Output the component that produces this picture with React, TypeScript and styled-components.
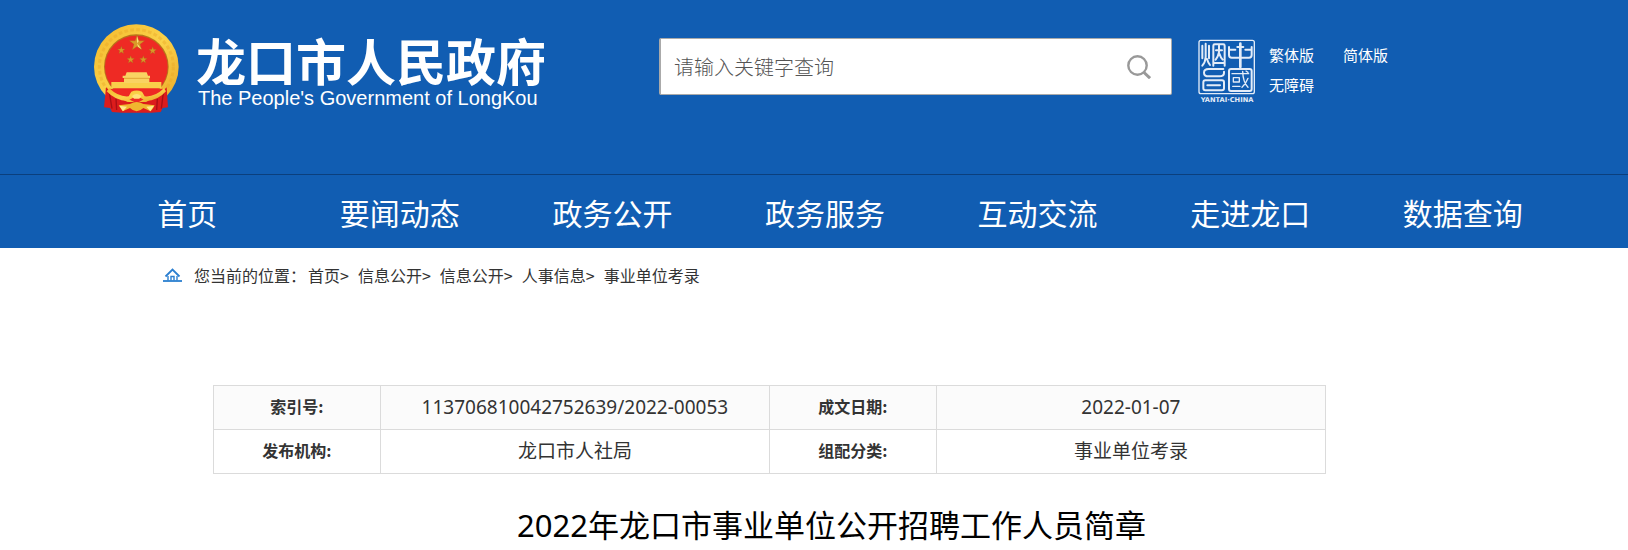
import React from "react";
import styled, { createGlobalStyle } from "styled-components";

const BLUE = "#115db2";
const SANS = `"Noto Sans", "Noto Sans CJK SC", sans-serif`;
const CJK = `"Noto Sans CJK SC", sans-serif`;

const GlobalStyle = createGlobalStyle`
  *, *::before, *::after { box-sizing: border-box; }
  body { margin: 0; background: #fff; color: #333; font-family: ${CJK}; }
  a { color: inherit; text-decoration: none; }
`;

const Header = styled.header`
  background: ${BLUE};
  color: #fff;
`;

const TopBar = styled.div`
  display: flex;
  align-items: flex-start;
  min-height: 174px;
  padding: 24px 94px 0;
`;

const Brand = styled.a`
  display: flex;
  align-items: flex-start;
  gap: 17px;
  width: 565px;
  flex: none;
`;

const BrandText = styled.span`
  display: flex;
  flex-direction: column;
  padding-top: 8px;
  white-space: nowrap;
`;

const BrandName = styled.span`
  font-size: 50px;
  line-height: 54px;
  font-weight: 700;
`;

const BrandLatin = styled.span`
  padding-left: 2px;
  font-family: "Liberation Sans", sans-serif;
  font-size: 20px;
  line-height: 24px;
`;

const SearchForm = styled.form`
  display: flex;
  align-items: center;
  flex: 0 1 513px;
  height: 57px;
  margin-top: 14px;
  padding: 0 20px 0 13px;
  background: #fff;
  border: 1px solid #aaa;
  border-left-width: 2px;
  border-radius: 2px;
`;

const SearchInput = styled.input`
  flex: 1;
  min-width: 0;
  padding: 0;
  border: 0;
  outline: 0;
  background: none;
  color: #333;
  font-family: ${CJK};
  font-size: 20px;
  line-height: 30px;
  font-weight: 300;
  &::placeholder { color: #555; opacity: 1; }
`;

const SearchButton = styled.button`
  display: flex;
  padding: 0;
  border: 0;
  background: none;
  cursor: pointer;
`;

const SealLink = styled.a`
  display: flex;
  flex: none;
  margin: 15px 13px 0 26px;
`;

const Tools = styled.nav`
  display: grid;
  grid-template-columns: 74px 74px;
  grid-auto-rows: 30px;
  margin-top: 16px;
  font-size: 15px;
  line-height: 30px;
`;

const MainNav = styled.nav`
  display: flex;
  border-top: 1px solid #0b3f7d;
  padding: 0 59px 0 81px;
`;

const NavLink = styled.a`
  flex: 1;
  padding: 15px 0 14px;
  text-align: center;
  font-size: 30px;
  line-height: 44px;
  white-space: nowrap;
`;

const Breadcrumb = styled.nav`
  display: flex;
  align-items: center;
  padding: 15px 163px 0;
  font-size: 16px;
  line-height: 24px;
`;

const CrumbLabel = styled.span`
  margin-left: 12px;
`;

const Crumb = styled.span`
  margin-left: 9px;
  &:first-of-type { margin-left: 0; }
`;

const Trail = styled.span`
  display: flex;
  margin-left: 2px;
`;

const Article = styled.main`
  padding: 98px 302px 0 213px;
`;

const InfoTable = styled.table`
  width: 100%;
  table-layout: fixed;
  border-collapse: collapse;
`;

const InfoRow = styled.tr<{ $shaded?: boolean }>`
  background: ${(p) => (p.$shaded ? "#fbfbfb" : "#fff")};
`;

const Label = styled.th`
  width: 15%;
  height: 44px;
  padding: 0 0 3px;
  border: 1px solid #dbdbdb;
  font-size: 16px;
  line-height: 24px;
  font-weight: 700;
`;

const Value = styled.td`
  padding: 0 0 2px;
  border: 1px solid #dbdbdb;
  text-align: center;
  font-family: ${SANS};
  font-size: 19px;
  line-height: 28px;
`;

const Title = styled.h1`
  margin: 27px -124px 0 0;
  color: #000;
  text-align: center;
  font-family: ${SANS};
  font-size: 31px;
  line-height: 48px;
  font-weight: 400;
`;

const star = (cx: number, cy: number, r: number) =>
  Array.from({ length: 10 }, (_, i) => {
    const a = (Math.PI / 5) * i - Math.PI / 2;
    const d = i % 2 ? r * 0.4 : r;
    return `${(cx + d * Math.cos(a)).toFixed(2)},${(cy + d * Math.sin(a)).toFixed(2)}`;
  }).join(" ");

const Emblem = () => (
  <svg width="85" height="91" viewBox="0 0 255 273" aria-hidden="true">
    <defs>
      <linearGradient id="gold" x1="0" y1="0" x2="1" y2="1">
        <stop offset="0" stopColor="#f3b92c" />
        <stop offset=".5" stopColor="#fbd24a" />
        <stop offset="1" stopColor="#e9a625" />
      </linearGradient>
    </defs>
    <circle cx="127" cy="128" r="127" fill="url(#gold)" />
    <circle cx="127" cy="128" r="111" fill="none" stroke="#e9a625" strokeWidth="9" strokeDasharray="11 7" opacity=".4" />
    <circle cx="127" cy="128" r="97" fill="#b9741a" />
    <circle cx="127" cy="129" r="94" fill="#ee2a24" />
    <path d="M36 190 L60 212 L100 234 H156 L196 212 L218 190 L222 250 L206 252 L200 264 L172 266 H84 L54 264 L48 252 L30 250 Z" fill="#dc1c1c" />
    <path d="M46 206 L54 254 M208 206 L202 254 M66 224 L68 258 M190 224 L188 258" stroke="#a80f16" strokeWidth="4" />
    <path d="M52 174 H202 V193 H52 Z" fill="#f9cf4a" />
    <path d="M90 162 H166 V177 H90 Z M98 145 H158 L162 155 H168 V162 H86 V155 H94 Z" fill="#f9d362" />
    <path d="M90 163 H166" stroke="#d58e20" strokeWidth="2" />
    <path d="M46 194 Q128 202 208 194 L198 208 Q170 232 150 226 L128 238 L104 226 Q82 232 56 208 Z" fill="#ee2a24" />
    <path d="M46 193 Q74 220 104 217 L112 203 Q128 196 144 203 L152 217 Q182 220 210 193 L216 202 Q192 230 155 231 L140 222 H116 L100 231 Q64 230 38 202 Z" fill="url(#gold)" />
    <path d="M114 216 Q128 204 142 216 L136 224 H120 Z" fill="#ffe07b" />
    <path d="M74 244 L108 240 Q128 228 148 240 L182 244 Q178 254 170 262 L148 252 Q128 272 108 252 L86 262 Z" fill="#f0b62f" />
    <path d="M76 245 L99 248 L87 262 Z M180 245 L157 248 L169 262 Z" fill="#ffe88c" />
    <g fill="#d99a28" stroke="#a9641a" strokeWidth="1">
      <polygon points={star(129, 58, 24)} />
      <polygon points={star(82, 79, 12)} />
      <polygon points={star(176, 80, 12)} />
      <polygon points={star(110, 107, 12)} />
      <polygon points={star(148, 107, 12)} />
    </g>
    <path d="M129 36 L134 52 L129 58 Z M129 58 L143 76 L132 68 Z" fill="#ffe07b" />
  </svg>
);

const Seal = () => (
  <svg width="58" height="64" viewBox="24 20 174 192" role="img" aria-label="烟台">
    <g fill="none" stroke="#e3ecf8" strokeWidth="6" strokeLinejoin="round" strokeLinecap="round">
      <rect x="27" y="24" width="166" height="160" rx="6" strokeWidth="4" />
      <path d="M37 40 V78 M47 34 V74 Q46 90 37 100 M57 40 V78 M51 80 Q54 90 60 98" />
      <path d="M70 100 V40 Q70 36 74 36 H100 Q104 36 104 40 V100 M70 92 H104 M78 54 H96 M87 40 V60 Q84 74 77 82 M88 64 Q92 76 98 82" />
      <path d="M100 110 H56 Q42 110 42 121 Q42 132 56 132 H88 Q102 132 102 122 V118" />
      <path d="M46 144 H96 Q102 144 102 150 V168 Q102 174 96 174 H46 Q40 174 40 168 V150 Q40 144 46 144 Z M52 159 H90" />
      <path d="M117 44 V68 Q117 76 125 76 H177 Q185 76 185 68 V44 M117 52 H136 M166 52 H185" />
      <path d="M151 34 V104 M151 56 V100" strokeWidth="8" />
      <path d="M142 44 H160" />
      <rect x="117" y="110" width="68" height="66" rx="6" />
      <path d="M126 124 H176 M130 136 H148 V149 H130 Z M128 162 H150 M158 117 Q159 150 174 165 M174 138 Q168 154 156 165 M168 116 L174 120" strokeWidth="4" />
    </g>
    <text x="111" y="208" textAnchor="middle" fill="#e3ecf8" fontFamily="DejaVu Sans, sans-serif" fontSize="20" fontWeight="700">
      YANTAI·CHINA
    </text>
  </svg>
);

const SearchIcon = () => (
  <svg width="24" height="24" viewBox="0 0 24 24" fill="none" stroke="#999" strokeWidth="2.4" aria-hidden="true">
    <circle cx="10.5" cy="10.5" r="9.2" />
    <path d="M16.5 17 L23 23.2" strokeWidth="3" />
  </svg>
);

const HomeIcon = () => (
  <svg width="19" height="14" viewBox="0 0 19 14" fill="none" stroke="#2b7fd0" aria-hidden="true">
    <path d="M2.5 8.5 L9.5 1.5 L16.5 8.5" strokeWidth="1.8" />
    <path d="M5 8 V12.5 M14 8 V12.5 M8 12.5 V8.5 H11 V12.5" strokeWidth="1.4" />
    <path d="M0 13 H19" strokeWidth="1.8" />
  </svg>
);

const navItems = ["首页", "要闻动态", "政务公开", "政务服务", "互动交流", "走进龙口", "数据查询"];
const tools = ["繁体版", "简体版", "无障碍"];
const crumbs = ["首页", "信息公开", "信息公开", "人事信息", "事业单位考录"];
const rows = [
  ["索引号:", "113706810042752639/2022-00053", "成文日期:", "2022-01-07"],
  ["发布机构:", "龙口市人社局", "组配分类:", "事业单位考录"],
];

export default function App() {
  return (
    <>
      <GlobalStyle />
      <Header>
        <TopBar>
          <Brand href="#">
            <Emblem />
            <BrandText>
              <BrandName>龙口市人民政府</BrandName>
              <BrandLatin>The People's Government of LongKou</BrandLatin>
            </BrandText>
          </Brand>
          <SearchForm role="search" onSubmit={(e) => e.preventDefault()}>
            <SearchInput type="text" aria-label="请输入关键字查询" placeholder="请输入关键字查询" />
            <SearchButton type="submit" aria-label="查询">
              <SearchIcon />
            </SearchButton>
          </SearchForm>
          <SealLink href="#">
            <Seal />
          </SealLink>
          <Tools>
            {tools.map((t) => (
              <a href="#" key={t}>{t}</a>
            ))}
          </Tools>
        </TopBar>
        <MainNav>
          {navItems.map((n) => (
            <NavLink href="#" key={n}>{n}</NavLink>
          ))}
        </MainNav>
      </Header>
      <Breadcrumb>
        <HomeIcon />
        <CrumbLabel>您当前的位置：</CrumbLabel>
        <Trail>
          {crumbs.map((c, i) => (
            <Crumb key={i}>
              <a href="#">{c}</a>
              {i < crumbs.length - 1 && ">"}
            </Crumb>
          ))}
        </Trail>
      </Breadcrumb>
      <Article>
        <InfoTable>
          <tbody>
            {rows.map(([l1, v1, l2, v2], i) => (
              <InfoRow key={l1} $shaded={i === 0}>
                <Label scope="row">{l1}</Label>
                <Value>{v1}</Value>
                <Label scope="row">{l2}</Label>
                <Value>{v2}</Value>
              </InfoRow>
            ))}
          </tbody>
        </InfoTable>
        <Title>2022年龙口市事业单位公开招聘工作人员简章</Title>
      </Article>
    </>
  );
}
